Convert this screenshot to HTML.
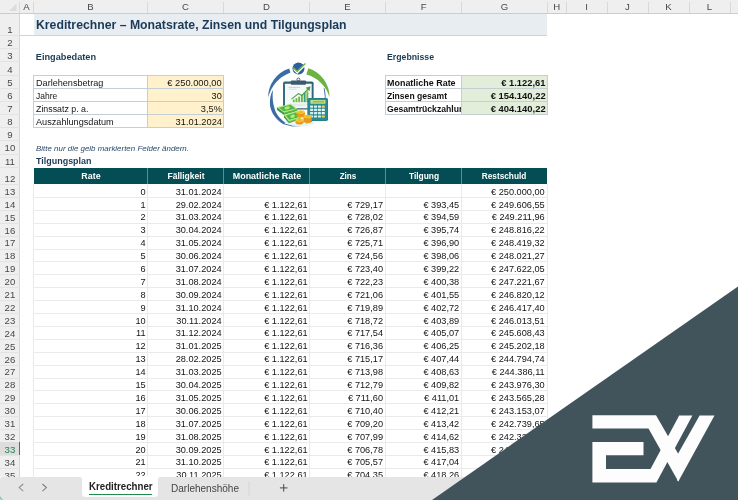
<!DOCTYPE html>
<html lang="de"><head><meta charset="utf-8"><title>Kreditrechner</title>
<style>
html,body{margin:0;padding:0}
body{width:738px;height:500px;overflow:hidden;position:relative;background:#fff;font-family:"Liberation Sans",sans-serif;color:#222}
.b{position:absolute}
.t{position:absolute;white-space:nowrap;transform-origin:0 0}
.t.r{transform-origin:100% 0}
.t.c{transform:translateX(-50%);transform-origin:50% 0}
.hd{font-size:9.6px;color:#484848}
.hd.g{color:#2a7d55}
.title{font-size:13.2px;font-weight:bold;color:#1b3a57}
.sec{font-size:9.2px;font-weight:bold;color:#1b3a57}
.sec2{font-size:9.6px;font-weight:bold;color:#1b3a57}
.note{font-size:7.9px;font-style:italic;color:#2b4a68}
.cell{font-size:9.2px;color:#141414}
.cellb{font-size:9.2px;font-weight:bold;color:#111}
.th{font-size:8.8px;font-weight:bold;color:#fff}
.tab{font-size:10px;color:#444}
.tabb{font-size:10px;font-weight:bold;color:#222}
#wrap{position:absolute;left:0;top:0;width:738px;height:500px;will-change:transform}
</style></head><body>
<div id="wrap">
<div class="b" style="left:0.00px;top:0.00px;width:738.00px;height:13.50px;background:#efefef"></div>
<div class="b" style="left:0.00px;top:12.80px;width:738.00px;height:0.80px;background:#cccccc"></div>
<div class="b" style="left:0.00px;top:13.50px;width:19.50px;height:466.50px;background:#efefef"></div>
<div class="b" style="left:19.00px;top:13.50px;width:0.70px;height:466.50px;background:#d6d6d6"></div>
<svg class="b" style="left:0;top:0" width="20" height="14"><polygon points="16.5,3.5 16.5,11 9,11" fill="#dcdcdc"/></svg>
<div class="b" style="left:33.10px;top:2.00px;width:0.80px;height:11.00px;background:#d9d9d9"></div>
<span class="t c hd" style="left:26.50px;top:1px;line-height:11px;">A</span>
<div class="b" style="left:147.10px;top:2.00px;width:0.80px;height:11.00px;background:#d9d9d9"></div>
<span class="t c hd" style="left:90.50px;top:1px;line-height:11px;">B</span>
<div class="b" style="left:223.10px;top:2.00px;width:0.80px;height:11.00px;background:#d9d9d9"></div>
<span class="t c hd" style="left:185.50px;top:1px;line-height:11px;">C</span>
<div class="b" style="left:309.10px;top:2.00px;width:0.80px;height:11.00px;background:#d9d9d9"></div>
<span class="t c hd" style="left:266.50px;top:1px;line-height:11px;">D</span>
<div class="b" style="left:385.10px;top:2.00px;width:0.80px;height:11.00px;background:#d9d9d9"></div>
<span class="t c hd" style="left:347.50px;top:1px;line-height:11px;">E</span>
<div class="b" style="left:461.30px;top:2.00px;width:0.80px;height:11.00px;background:#d9d9d9"></div>
<span class="t c hd" style="left:423.60px;top:1px;line-height:11px;">F</span>
<div class="b" style="left:546.80px;top:2.00px;width:0.80px;height:11.00px;background:#d9d9d9"></div>
<span class="t c hd" style="left:504.45px;top:1px;line-height:11px;">G</span>
<div class="b" style="left:565.80px;top:2.00px;width:0.80px;height:11.00px;background:#d9d9d9"></div>
<span class="t c hd" style="left:556.70px;top:1px;line-height:11px;">H</span>
<div class="b" style="left:606.60px;top:2.00px;width:0.80px;height:11.00px;background:#d9d9d9"></div>
<span class="t c hd" style="left:586.60px;top:1px;line-height:11px;">I</span>
<div class="b" style="left:647.60px;top:2.00px;width:0.80px;height:11.00px;background:#d9d9d9"></div>
<span class="t c hd" style="left:627.50px;top:1px;line-height:11px;">J</span>
<div class="b" style="left:688.60px;top:2.00px;width:0.80px;height:11.00px;background:#d9d9d9"></div>
<span class="t c hd" style="left:668.50px;top:1px;line-height:11px;">K</span>
<div class="b" style="left:729.60px;top:2.00px;width:0.80px;height:11.00px;background:#d9d9d9"></div>
<span class="t c hd" style="left:709.50px;top:1px;line-height:11px;">L</span>
<div class="b" style="left:770.60px;top:2.00px;width:0.80px;height:11.00px;background:#d9d9d9"></div>
<span class="t c hd" style="left:750.50px;top:1px;line-height:11px;">M</span>
<div class="b" style="left:19.10px;top:2.00px;width:0.80px;height:11.00px;background:#d9d9d9"></div>
<div class="b" style="left:0.00px;top:34.90px;width:19.50px;height:0.80px;background:#e3e3e3"></div>
<span class="t c hd" style="left:9.90px;top:24px;line-height:11px;">1</span>
<div class="b" style="left:0.00px;top:48.26px;width:19.50px;height:0.80px;background:#e3e3e3"></div>
<span class="t c hd" style="left:9.90px;top:37px;line-height:11px;">2</span>
<div class="b" style="left:0.00px;top:61.42px;width:19.50px;height:0.80px;background:#e3e3e3"></div>
<span class="t c hd" style="left:9.90px;top:50px;line-height:11px;">3</span>
<div class="b" style="left:0.00px;top:74.58px;width:19.50px;height:0.80px;background:#e3e3e3"></div>
<span class="t c hd" style="left:9.90px;top:64px;line-height:11px;">4</span>
<div class="b" style="left:0.00px;top:87.74px;width:19.50px;height:0.80px;background:#e3e3e3"></div>
<span class="t c hd" style="left:9.90px;top:77px;line-height:11px;">5</span>
<div class="b" style="left:0.00px;top:100.90px;width:19.50px;height:0.80px;background:#e3e3e3"></div>
<span class="t c hd" style="left:9.90px;top:90px;line-height:11px;">6</span>
<div class="b" style="left:0.00px;top:114.06px;width:19.50px;height:0.80px;background:#e3e3e3"></div>
<span class="t c hd" style="left:9.90px;top:103px;line-height:11px;">7</span>
<div class="b" style="left:0.00px;top:127.22px;width:19.50px;height:0.80px;background:#e3e3e3"></div>
<span class="t c hd" style="left:9.90px;top:116px;line-height:11px;">8</span>
<div class="b" style="left:0.00px;top:140.38px;width:19.50px;height:0.80px;background:#e3e3e3"></div>
<span class="t c hd" style="left:9.90px;top:129px;line-height:11px;">9</span>
<div class="b" style="left:0.00px;top:153.54px;width:19.50px;height:0.80px;background:#e3e3e3"></div>
<span class="t c hd" style="left:9.90px;top:142px;line-height:11px;">10</span>
<div class="b" style="left:0.00px;top:166.70px;width:19.50px;height:0.80px;background:#e3e3e3"></div>
<span class="t c hd" style="left:9.90px;top:156px;line-height:11px;">11</span>
<div class="b" style="left:0.00px;top:184.00px;width:19.50px;height:0.80px;background:#e3e3e3"></div>
<span class="t c hd" style="left:9.90px;top:173px;line-height:11px;">12</span>
<div class="b" style="left:0.00px;top:196.90px;width:19.50px;height:0.80px;background:#e3e3e3"></div>
<span class="t c hd" style="left:9.90px;top:186px;line-height:11px;">13</span>
<div class="b" style="left:0.00px;top:209.80px;width:19.50px;height:0.80px;background:#e3e3e3"></div>
<span class="t c hd" style="left:9.90px;top:199px;line-height:11px;">14</span>
<div class="b" style="left:0.00px;top:222.70px;width:19.50px;height:0.80px;background:#e3e3e3"></div>
<span class="t c hd" style="left:9.90px;top:212px;line-height:11px;">15</span>
<div class="b" style="left:0.00px;top:235.60px;width:19.50px;height:0.80px;background:#e3e3e3"></div>
<span class="t c hd" style="left:9.90px;top:225px;line-height:11px;">16</span>
<div class="b" style="left:0.00px;top:248.50px;width:19.50px;height:0.80px;background:#e3e3e3"></div>
<span class="t c hd" style="left:9.90px;top:237px;line-height:11px;">17</span>
<div class="b" style="left:0.00px;top:261.40px;width:19.50px;height:0.80px;background:#e3e3e3"></div>
<span class="t c hd" style="left:9.90px;top:250px;line-height:11px;">18</span>
<div class="b" style="left:0.00px;top:274.30px;width:19.50px;height:0.80px;background:#e3e3e3"></div>
<span class="t c hd" style="left:9.90px;top:263px;line-height:11px;">19</span>
<div class="b" style="left:0.00px;top:287.20px;width:19.50px;height:0.80px;background:#e3e3e3"></div>
<span class="t c hd" style="left:9.90px;top:276px;line-height:11px;">20</span>
<div class="b" style="left:0.00px;top:300.10px;width:19.50px;height:0.80px;background:#e3e3e3"></div>
<span class="t c hd" style="left:9.90px;top:289px;line-height:11px;">21</span>
<div class="b" style="left:0.00px;top:313.00px;width:19.50px;height:0.80px;background:#e3e3e3"></div>
<span class="t c hd" style="left:9.90px;top:302px;line-height:11px;">22</span>
<div class="b" style="left:0.00px;top:325.90px;width:19.50px;height:0.80px;background:#e3e3e3"></div>
<span class="t c hd" style="left:9.90px;top:315px;line-height:11px;">23</span>
<div class="b" style="left:0.00px;top:338.80px;width:19.50px;height:0.80px;background:#e3e3e3"></div>
<span class="t c hd" style="left:9.90px;top:328px;line-height:11px;">24</span>
<div class="b" style="left:0.00px;top:351.70px;width:19.50px;height:0.80px;background:#e3e3e3"></div>
<span class="t c hd" style="left:9.90px;top:341px;line-height:11px;">25</span>
<div class="b" style="left:0.00px;top:364.60px;width:19.50px;height:0.80px;background:#e3e3e3"></div>
<span class="t c hd" style="left:9.90px;top:354px;line-height:11px;">26</span>
<div class="b" style="left:0.00px;top:377.50px;width:19.50px;height:0.80px;background:#e3e3e3"></div>
<span class="t c hd" style="left:9.90px;top:366px;line-height:11px;">27</span>
<div class="b" style="left:0.00px;top:390.40px;width:19.50px;height:0.80px;background:#e3e3e3"></div>
<span class="t c hd" style="left:9.90px;top:379px;line-height:11px;">28</span>
<div class="b" style="left:0.00px;top:403.30px;width:19.50px;height:0.80px;background:#e3e3e3"></div>
<span class="t c hd" style="left:9.90px;top:392px;line-height:11px;">29</span>
<div class="b" style="left:0.00px;top:416.20px;width:19.50px;height:0.80px;background:#e3e3e3"></div>
<span class="t c hd" style="left:9.90px;top:405px;line-height:11px;">30</span>
<div class="b" style="left:0.00px;top:429.10px;width:19.50px;height:0.80px;background:#e3e3e3"></div>
<span class="t c hd" style="left:9.90px;top:418px;line-height:11px;">31</span>
<div class="b" style="left:0.00px;top:442.00px;width:19.50px;height:0.80px;background:#e3e3e3"></div>
<span class="t c hd" style="left:9.90px;top:431px;line-height:11px;">32</span>
<div class="b" style="left:0.00px;top:442.40px;width:19.70px;height:12.90px;background:#dddddd"></div>
<div class="b" style="left:18.50px;top:442.40px;width:1.30px;height:12.90px;background:#2a8555"></div>
<div class="b" style="left:0.00px;top:454.90px;width:19.50px;height:0.80px;background:#e3e3e3"></div>
<span class="t c hd g" style="left:9.90px;top:444px;line-height:11px;">33</span>
<div class="b" style="left:0.00px;top:467.80px;width:19.50px;height:0.80px;background:#e3e3e3"></div>
<span class="t c hd" style="left:9.90px;top:457px;line-height:11px;">34</span>
<div class="b" style="left:0.00px;top:480.70px;width:19.50px;height:0.80px;background:#e3e3e3"></div>
<span class="t c hd" style="left:9.90px;top:470px;line-height:11px;">35</span>
<div class="b" style="left:33.50px;top:13.60px;width:513.70px;height:21.40px;background:#e8edf2"></div>
<div class="b" style="left:19.70px;top:34.90px;width:527.50px;height:0.70px;background:#ccd4da"></div>
<span class="t title" style="left:36.00px;top:17px;line-height:15px;transform:scaleX(0.9282);">Kreditrechner – Monatsrate, Zinsen und Tilgungsplan</span>
<span class="t sec" style="left:35.80px;top:52px;line-height:10px;">Eingabedaten</span>
<span class="t sec" style="left:387.40px;top:52px;line-height:10px;transform:scaleX(0.9489);">Ergebnisse</span>
<div class="b" style="left:147.50px;top:75.70px;width:76.00px;height:51.90px;background:#fff1cb"></div>
<div class="b" style="left:33.10px;top:75.35px;width:190.80px;height:0.70px;background:#c6ced5"></div>
<div class="b" style="left:33.10px;top:88.35px;width:190.80px;height:0.70px;background:#c6ced5"></div>
<div class="b" style="left:33.10px;top:101.35px;width:190.80px;height:0.70px;background:#c6ced5"></div>
<div class="b" style="left:33.10px;top:114.35px;width:190.80px;height:0.70px;background:#c6ced5"></div>
<div class="b" style="left:33.10px;top:127.25px;width:190.80px;height:0.70px;background:#c6ced5"></div>
<div class="b" style="left:33.15px;top:75.35px;width:0.70px;height:52.60px;background:#c6ced5"></div>
<div class="b" style="left:147.15px;top:75.35px;width:0.70px;height:52.60px;background:#c6ced5"></div>
<div class="b" style="left:223.15px;top:75.35px;width:0.70px;height:52.60px;background:#c6ced5"></div>
<span class="t cell" style="left:35.60px;top:78px;line-height:10px;transform:scaleX(0.9906);">Darlehensbetrag</span>
<span class="t r cell" style="right:516.20px;top:78px;line-height:10px;transform:scaleX(1.0139);">€ 250.000,00</span>
<span class="t cell" style="left:35.60px;top:91px;line-height:10px;transform:scaleX(0.9224);">Jahre</span>
<span class="t r cell" style="right:516.20px;top:91px;line-height:10px;">30</span>
<span class="t cell" style="left:35.60px;top:104px;line-height:10px;transform:scaleX(0.9590);">Zinssatz p. a.</span>
<span class="t r cell" style="right:516.20px;top:104px;line-height:10px;">3,5%</span>
<span class="t cell" style="left:35.60px;top:117px;line-height:10px;transform:scaleX(0.9942);">Auszahlungsdatum</span>
<span class="t r cell" style="right:516.20px;top:117px;line-height:10px;transform:scaleX(1.0090);">31.01.2024</span>
<div class="b" style="left:461.70px;top:75.70px;width:85.50px;height:38.90px;background:#e2eeda"></div>
<div class="b" style="left:385.10px;top:75.35px;width:162.50px;height:0.70px;background:#c6ced5"></div>
<div class="b" style="left:385.10px;top:88.25px;width:162.50px;height:0.70px;background:#c6ced5"></div>
<div class="b" style="left:385.10px;top:101.35px;width:162.50px;height:0.70px;background:#c6ced5"></div>
<div class="b" style="left:385.10px;top:114.25px;width:162.50px;height:0.70px;background:#c6ced5"></div>
<div class="b" style="left:385.15px;top:75.35px;width:0.70px;height:39.60px;background:#c6ced5"></div>
<div class="b" style="left:461.35px;top:75.35px;width:0.70px;height:39.60px;background:#c6ced5"></div>
<div class="b" style="left:546.85px;top:75.35px;width:0.70px;height:39.60px;background:#c6ced5"></div>
<div class="b" style="left:386px;top:76px;width:75.4px;height:13px;overflow:hidden">
<span class="t cellb" style="left:1.30px;top:2px;line-height:10px;transform:scaleX(0.9737);">Monatliche Rate</span>
</div>
<span class="t r cellb" style="right:192.60px;top:78px;line-height:10px;transform:scaleX(1.0199);">€ 1.122,61</span>
<div class="b" style="left:386px;top:89px;width:75.4px;height:13px;overflow:hidden">
<span class="t cellb" style="left:1.30px;top:2px;line-height:10px;transform:scaleX(0.9325);">Zinsen gesamt</span>
</div>
<span class="t r cellb" style="right:192.60px;top:91px;line-height:10px;transform:scaleX(1.0250);">€ 154.140,22</span>
<div class="b" style="left:386px;top:102px;width:75.4px;height:13px;overflow:hidden">
<span class="t cellb" style="left:1.30px;top:2px;line-height:10px;transform:scaleX(0.9393);">Gesamtrückzahlung</span>
</div>
<span class="t r cellb" style="right:192.60px;top:104px;line-height:10px;transform:scaleX(1.0250);">€ 404.140,22</span>
<span class="t note" style="left:35.80px;top:144px;line-height:9px;transform:scaleX(1.0052);">Bitte nur die gelb markierten Felder ändern.</span>
<span class="t sec2" style="left:36.00px;top:155px;line-height:11px;transform:scaleX(0.9323);">Tilgungsplan</span>
<div class="b" style="left:33.60px;top:167.50px;width:513.60px;height:16.40px;background:#044d54"></div>
<span class="t c th" style="left:90.50px;top:171px;line-height:10px;transform:translateX(-50%) scaleX(1.0116);">Rate</span>
<span class="t c th" style="left:185.50px;top:171px;line-height:10px;transform:translateX(-50%) scaleX(0.9701);">Fälligkeit</span>
<div class="b" style="left:147.10px;top:167.50px;width:0.80px;height:16.40px;background:#5d8b8f"></div>
<span class="t c th" style="left:266.50px;top:171px;line-height:10px;transform:translateX(-50%) scaleX(1.0138);">Monatliche Rate</span>
<div class="b" style="left:223.10px;top:167.50px;width:0.80px;height:16.40px;background:#5d8b8f"></div>
<span class="t c th" style="left:347.50px;top:171px;line-height:10px;transform:translateX(-50%) scaleX(0.9230);">Zins</span>
<div class="b" style="left:309.10px;top:167.50px;width:0.80px;height:16.40px;background:#5d8b8f"></div>
<span class="t c th" style="left:423.60px;top:171px;line-height:10px;transform:translateX(-50%) scaleX(0.9554);">Tilgung</span>
<div class="b" style="left:385.10px;top:167.50px;width:0.80px;height:16.40px;background:#5d8b8f"></div>
<span class="t c th" style="left:504.45px;top:171px;line-height:10px;transform:translateX(-50%) scaleX(0.9405);">Restschuld</span>
<div class="b" style="left:461.30px;top:167.50px;width:0.80px;height:16.40px;background:#5d8b8f"></div>
<div class="b" style="left:33.50px;top:196.90px;width:514.10px;height:0.80px;background:#e8ebee"></div>
<span class="t r cell" style="right:592.40px;top:187px;line-height:10px;">0</span>
<span class="t r cell" style="right:516.40px;top:187px;line-height:10px;">31.01.2024</span>
<span class="t r cell" style="right:193.30px;top:187px;line-height:10px;">€ 250.000,00</span>
<div class="b" style="left:33.50px;top:209.80px;width:514.10px;height:0.80px;background:#e8ebee"></div>
<span class="t r cell" style="right:592.40px;top:200px;line-height:10px;">1</span>
<span class="t r cell" style="right:516.40px;top:200px;line-height:10px;">29.02.2024</span>
<span class="t r cell" style="right:430.40px;top:200px;line-height:10px;">€ 1.122,61</span>
<span class="t r cell" style="right:355.00px;top:200px;line-height:10px;">€ 729,17</span>
<span class="t r cell" style="right:278.80px;top:200px;line-height:10px;">€ 393,45</span>
<span class="t r cell" style="right:193.30px;top:200px;line-height:10px;">€ 249.606,55</span>
<div class="b" style="left:33.50px;top:222.70px;width:514.10px;height:0.80px;background:#e8ebee"></div>
<span class="t r cell" style="right:592.40px;top:212px;line-height:10px;">2</span>
<span class="t r cell" style="right:516.40px;top:212px;line-height:10px;">31.03.2024</span>
<span class="t r cell" style="right:430.40px;top:212px;line-height:10px;">€ 1.122,61</span>
<span class="t r cell" style="right:355.00px;top:212px;line-height:10px;">€ 728,02</span>
<span class="t r cell" style="right:278.80px;top:212px;line-height:10px;">€ 394,59</span>
<span class="t r cell" style="right:193.30px;top:212px;line-height:10px;">€ 249.211,96</span>
<div class="b" style="left:33.50px;top:235.60px;width:514.10px;height:0.80px;background:#e8ebee"></div>
<span class="t r cell" style="right:592.40px;top:225px;line-height:10px;">3</span>
<span class="t r cell" style="right:516.40px;top:225px;line-height:10px;">30.04.2024</span>
<span class="t r cell" style="right:430.40px;top:225px;line-height:10px;">€ 1.122,61</span>
<span class="t r cell" style="right:355.00px;top:225px;line-height:10px;">€ 726,87</span>
<span class="t r cell" style="right:278.80px;top:225px;line-height:10px;">€ 395,74</span>
<span class="t r cell" style="right:193.30px;top:225px;line-height:10px;">€ 248.816,22</span>
<div class="b" style="left:33.50px;top:248.50px;width:514.10px;height:0.80px;background:#e8ebee"></div>
<span class="t r cell" style="right:592.40px;top:238px;line-height:10px;">4</span>
<span class="t r cell" style="right:516.40px;top:238px;line-height:10px;">31.05.2024</span>
<span class="t r cell" style="right:430.40px;top:238px;line-height:10px;">€ 1.122,61</span>
<span class="t r cell" style="right:355.00px;top:238px;line-height:10px;">€ 725,71</span>
<span class="t r cell" style="right:278.80px;top:238px;line-height:10px;">€ 396,90</span>
<span class="t r cell" style="right:193.30px;top:238px;line-height:10px;">€ 248.419,32</span>
<div class="b" style="left:33.50px;top:261.40px;width:514.10px;height:0.80px;background:#e8ebee"></div>
<span class="t r cell" style="right:592.40px;top:251px;line-height:10px;">5</span>
<span class="t r cell" style="right:516.40px;top:251px;line-height:10px;">30.06.2024</span>
<span class="t r cell" style="right:430.40px;top:251px;line-height:10px;">€ 1.122,61</span>
<span class="t r cell" style="right:355.00px;top:251px;line-height:10px;">€ 724,56</span>
<span class="t r cell" style="right:278.80px;top:251px;line-height:10px;">€ 398,06</span>
<span class="t r cell" style="right:193.30px;top:251px;line-height:10px;">€ 248.021,27</span>
<div class="b" style="left:33.50px;top:274.30px;width:514.10px;height:0.80px;background:#e8ebee"></div>
<span class="t r cell" style="right:592.40px;top:264px;line-height:10px;">6</span>
<span class="t r cell" style="right:516.40px;top:264px;line-height:10px;">31.07.2024</span>
<span class="t r cell" style="right:430.40px;top:264px;line-height:10px;">€ 1.122,61</span>
<span class="t r cell" style="right:355.00px;top:264px;line-height:10px;">€ 723,40</span>
<span class="t r cell" style="right:278.80px;top:264px;line-height:10px;">€ 399,22</span>
<span class="t r cell" style="right:193.30px;top:264px;line-height:10px;">€ 247.622,05</span>
<div class="b" style="left:33.50px;top:287.20px;width:514.10px;height:0.80px;background:#e8ebee"></div>
<span class="t r cell" style="right:592.40px;top:277px;line-height:10px;">7</span>
<span class="t r cell" style="right:516.40px;top:277px;line-height:10px;">31.08.2024</span>
<span class="t r cell" style="right:430.40px;top:277px;line-height:10px;">€ 1.122,61</span>
<span class="t r cell" style="right:355.00px;top:277px;line-height:10px;">€ 722,23</span>
<span class="t r cell" style="right:278.80px;top:277px;line-height:10px;">€ 400,38</span>
<span class="t r cell" style="right:193.30px;top:277px;line-height:10px;">€ 247.221,67</span>
<div class="b" style="left:33.50px;top:300.10px;width:514.10px;height:0.80px;background:#e8ebee"></div>
<span class="t r cell" style="right:592.40px;top:290px;line-height:10px;">8</span>
<span class="t r cell" style="right:516.40px;top:290px;line-height:10px;">30.09.2024</span>
<span class="t r cell" style="right:430.40px;top:290px;line-height:10px;">€ 1.122,61</span>
<span class="t r cell" style="right:355.00px;top:290px;line-height:10px;">€ 721,06</span>
<span class="t r cell" style="right:278.80px;top:290px;line-height:10px;">€ 401,55</span>
<span class="t r cell" style="right:193.30px;top:290px;line-height:10px;">€ 246.820,12</span>
<div class="b" style="left:33.50px;top:313.00px;width:514.10px;height:0.80px;background:#e8ebee"></div>
<span class="t r cell" style="right:592.40px;top:303px;line-height:10px;">9</span>
<span class="t r cell" style="right:516.40px;top:303px;line-height:10px;">31.10.2024</span>
<span class="t r cell" style="right:430.40px;top:303px;line-height:10px;">€ 1.122,61</span>
<span class="t r cell" style="right:355.00px;top:303px;line-height:10px;">€ 719,89</span>
<span class="t r cell" style="right:278.80px;top:303px;line-height:10px;">€ 402,72</span>
<span class="t r cell" style="right:193.30px;top:303px;line-height:10px;">€ 246.417,40</span>
<div class="b" style="left:33.50px;top:325.90px;width:514.10px;height:0.80px;background:#e8ebee"></div>
<span class="t r cell" style="right:592.40px;top:316px;line-height:10px;">10</span>
<span class="t r cell" style="right:516.40px;top:316px;line-height:10px;">30.11.2024</span>
<span class="t r cell" style="right:430.40px;top:316px;line-height:10px;">€ 1.122,61</span>
<span class="t r cell" style="right:355.00px;top:316px;line-height:10px;">€ 718,72</span>
<span class="t r cell" style="right:278.80px;top:316px;line-height:10px;">€ 403,89</span>
<span class="t r cell" style="right:193.30px;top:316px;line-height:10px;">€ 246.013,51</span>
<div class="b" style="left:33.50px;top:338.80px;width:514.10px;height:0.80px;background:#e8ebee"></div>
<span class="t r cell" style="right:592.40px;top:328px;line-height:10px;">11</span>
<span class="t r cell" style="right:516.40px;top:328px;line-height:10px;">31.12.2024</span>
<span class="t r cell" style="right:430.40px;top:328px;line-height:10px;">€ 1.122,61</span>
<span class="t r cell" style="right:355.00px;top:328px;line-height:10px;">€ 717,54</span>
<span class="t r cell" style="right:278.80px;top:328px;line-height:10px;">€ 405,07</span>
<span class="t r cell" style="right:193.30px;top:328px;line-height:10px;">€ 245.608,43</span>
<div class="b" style="left:33.50px;top:351.70px;width:514.10px;height:0.80px;background:#e8ebee"></div>
<span class="t r cell" style="right:592.40px;top:341px;line-height:10px;">12</span>
<span class="t r cell" style="right:516.40px;top:341px;line-height:10px;">31.01.2025</span>
<span class="t r cell" style="right:430.40px;top:341px;line-height:10px;">€ 1.122,61</span>
<span class="t r cell" style="right:355.00px;top:341px;line-height:10px;">€ 716,36</span>
<span class="t r cell" style="right:278.80px;top:341px;line-height:10px;">€ 406,25</span>
<span class="t r cell" style="right:193.30px;top:341px;line-height:10px;">€ 245.202,18</span>
<div class="b" style="left:33.50px;top:364.60px;width:514.10px;height:0.80px;background:#e8ebee"></div>
<span class="t r cell" style="right:592.40px;top:354px;line-height:10px;">13</span>
<span class="t r cell" style="right:516.40px;top:354px;line-height:10px;">28.02.2025</span>
<span class="t r cell" style="right:430.40px;top:354px;line-height:10px;">€ 1.122,61</span>
<span class="t r cell" style="right:355.00px;top:354px;line-height:10px;">€ 715,17</span>
<span class="t r cell" style="right:278.80px;top:354px;line-height:10px;">€ 407,44</span>
<span class="t r cell" style="right:193.30px;top:354px;line-height:10px;">€ 244.794,74</span>
<div class="b" style="left:33.50px;top:377.50px;width:514.10px;height:0.80px;background:#e8ebee"></div>
<span class="t r cell" style="right:592.40px;top:367px;line-height:10px;">14</span>
<span class="t r cell" style="right:516.40px;top:367px;line-height:10px;">31.03.2025</span>
<span class="t r cell" style="right:430.40px;top:367px;line-height:10px;">€ 1.122,61</span>
<span class="t r cell" style="right:355.00px;top:367px;line-height:10px;">€ 713,98</span>
<span class="t r cell" style="right:278.80px;top:367px;line-height:10px;">€ 408,63</span>
<span class="t r cell" style="right:193.30px;top:367px;line-height:10px;">€ 244.386,11</span>
<div class="b" style="left:33.50px;top:390.40px;width:514.10px;height:0.80px;background:#e8ebee"></div>
<span class="t r cell" style="right:592.40px;top:380px;line-height:10px;">15</span>
<span class="t r cell" style="right:516.40px;top:380px;line-height:10px;">30.04.2025</span>
<span class="t r cell" style="right:430.40px;top:380px;line-height:10px;">€ 1.122,61</span>
<span class="t r cell" style="right:355.00px;top:380px;line-height:10px;">€ 712,79</span>
<span class="t r cell" style="right:278.80px;top:380px;line-height:10px;">€ 409,82</span>
<span class="t r cell" style="right:193.30px;top:380px;line-height:10px;">€ 243.976,30</span>
<div class="b" style="left:33.50px;top:403.30px;width:514.10px;height:0.80px;background:#e8ebee"></div>
<span class="t r cell" style="right:592.40px;top:393px;line-height:10px;">16</span>
<span class="t r cell" style="right:516.40px;top:393px;line-height:10px;">31.05.2025</span>
<span class="t r cell" style="right:430.40px;top:393px;line-height:10px;">€ 1.122,61</span>
<span class="t r cell" style="right:355.00px;top:393px;line-height:10px;">€ 711,60</span>
<span class="t r cell" style="right:278.80px;top:393px;line-height:10px;">€ 411,01</span>
<span class="t r cell" style="right:193.30px;top:393px;line-height:10px;">€ 243.565,28</span>
<div class="b" style="left:33.50px;top:416.20px;width:514.10px;height:0.80px;background:#e8ebee"></div>
<span class="t r cell" style="right:592.40px;top:406px;line-height:10px;">17</span>
<span class="t r cell" style="right:516.40px;top:406px;line-height:10px;">30.06.2025</span>
<span class="t r cell" style="right:430.40px;top:406px;line-height:10px;">€ 1.122,61</span>
<span class="t r cell" style="right:355.00px;top:406px;line-height:10px;">€ 710,40</span>
<span class="t r cell" style="right:278.80px;top:406px;line-height:10px;">€ 412,21</span>
<span class="t r cell" style="right:193.30px;top:406px;line-height:10px;">€ 243.153,07</span>
<div class="b" style="left:33.50px;top:429.10px;width:514.10px;height:0.80px;background:#e8ebee"></div>
<span class="t r cell" style="right:592.40px;top:419px;line-height:10px;">18</span>
<span class="t r cell" style="right:516.40px;top:419px;line-height:10px;">31.07.2025</span>
<span class="t r cell" style="right:430.40px;top:419px;line-height:10px;">€ 1.122,61</span>
<span class="t r cell" style="right:355.00px;top:419px;line-height:10px;">€ 709,20</span>
<span class="t r cell" style="right:278.80px;top:419px;line-height:10px;">€ 413,42</span>
<span class="t r cell" style="right:193.30px;top:419px;line-height:10px;">€ 242.739,65</span>
<div class="b" style="left:33.50px;top:442.00px;width:514.10px;height:0.80px;background:#e8ebee"></div>
<span class="t r cell" style="right:592.40px;top:432px;line-height:10px;">19</span>
<span class="t r cell" style="right:516.40px;top:432px;line-height:10px;">31.08.2025</span>
<span class="t r cell" style="right:430.40px;top:432px;line-height:10px;">€ 1.122,61</span>
<span class="t r cell" style="right:355.00px;top:432px;line-height:10px;">€ 707,99</span>
<span class="t r cell" style="right:278.80px;top:432px;line-height:10px;">€ 414,62</span>
<span class="t r cell" style="right:193.30px;top:432px;line-height:10px;">€ 242.325,03</span>
<div class="b" style="left:33.50px;top:454.90px;width:514.10px;height:0.80px;background:#e8ebee"></div>
<span class="t r cell" style="right:592.40px;top:445px;line-height:10px;">20</span>
<span class="t r cell" style="right:516.40px;top:445px;line-height:10px;">30.09.2025</span>
<span class="t r cell" style="right:430.40px;top:445px;line-height:10px;">€ 1.122,61</span>
<span class="t r cell" style="right:355.00px;top:445px;line-height:10px;">€ 706,78</span>
<span class="t r cell" style="right:278.80px;top:445px;line-height:10px;">€ 415,83</span>
<span class="t r cell" style="right:193.30px;top:445px;line-height:10px;">€ 241.909,20</span>
<div class="b" style="left:33.50px;top:467.80px;width:514.10px;height:0.80px;background:#e8ebee"></div>
<span class="t r cell" style="right:592.40px;top:457px;line-height:10px;">21</span>
<span class="t r cell" style="right:516.40px;top:457px;line-height:10px;">31.10.2025</span>
<span class="t r cell" style="right:430.40px;top:457px;line-height:10px;">€ 1.122,61</span>
<span class="t r cell" style="right:355.00px;top:457px;line-height:10px;">€ 705,57</span>
<span class="t r cell" style="right:278.80px;top:457px;line-height:10px;">€ 417,04</span>
<span class="t r cell" style="right:193.30px;top:457px;line-height:10px;">€ 241.492,16</span>
<div class="b" style="left:33.50px;top:480.70px;width:514.10px;height:0.80px;background:#e8ebee"></div>
<span class="t r cell" style="right:592.40px;top:470px;line-height:10px;">22</span>
<span class="t r cell" style="right:516.40px;top:470px;line-height:10px;">30.11.2025</span>
<span class="t r cell" style="right:430.40px;top:470px;line-height:10px;">€ 1.122,61</span>
<span class="t r cell" style="right:355.00px;top:470px;line-height:10px;">€ 704,35</span>
<span class="t r cell" style="right:278.80px;top:470px;line-height:10px;">€ 418,26</span>
<span class="t r cell" style="right:193.30px;top:470px;line-height:10px;">€ 241.073,90</span>
<div class="b" style="left:147.10px;top:184.40px;width:0.80px;height:295.60px;background:#e8ebee"></div>
<div class="b" style="left:223.10px;top:184.40px;width:0.80px;height:295.60px;background:#e8ebee"></div>
<div class="b" style="left:309.10px;top:184.40px;width:0.80px;height:295.60px;background:#e8ebee"></div>
<div class="b" style="left:385.10px;top:184.40px;width:0.80px;height:295.60px;background:#e8ebee"></div>
<div class="b" style="left:461.30px;top:184.40px;width:0.80px;height:295.60px;background:#e8ebee"></div>
<div class="b" style="left:546.80px;top:184.40px;width:0.80px;height:295.60px;background:#e8ebee"></div>
<div class="b" style="left:33.10px;top:184.40px;width:0.80px;height:295.60px;background:#e8ebee"></div>
<!-- icon -->
<svg class="b" style="left:260px;top:55px" width="80" height="80" viewBox="0 0 500 500">
  <path d="M182.3,84.3 A190,190 0 0 0 51.0,265.0 A232.6,232.6 0 0 1 190.4,109.2 Z" fill="#3a6ca6"/>
  <path d="M81,219 C62,250 58,300 66,331 C75,365 100,405 150,434 L158,422 C120,395 98,365 90,331 C80,300 76,260 81,219 Z" fill="#3a6ca6"/>
  <path d="M302.3,82.4 A192,192 0 0 1 435.0,265.0 A204.7,204.7 0 0 0 289.3,122.4 Z" fill="#6db343"/>
  <path d="M401,208 A186,186 0 0 1 150,430" fill="none" stroke="#35609c" stroke-width="5.5"/>
  <path d="M150,418 Q244,470 345,428 L330,418 Q244,448 165,410 Z" fill="#eaf1f8"/>
  <circle cx="240.5" cy="84" r="37.5" fill="#2f5f9b"/>
  <polyline points="211,89 232.5,111 278,67" fill="none" stroke="#fff" stroke-width="11"/>
  <polyline points="206,78 232,102 284,53" fill="none" stroke="#6db343" stroke-width="9"/>
  <rect x="144" y="166" width="191" height="174" rx="11" fill="#2d6676"/>
  <rect x="156" y="179" width="167" height="154" rx="4" fill="#f6f9fa"/>
  <circle cx="240" cy="153" r="9" fill="none" stroke="#3c5872" stroke-width="6"/>
  <rect x="192" y="159" width="96" height="27" rx="7" fill="#3c5872"/>
  <rect x="178" y="199" width="72" height="5" fill="#b9c6ce"/>
  <rect x="178" y="211" width="52" height="5" fill="#d2dadf"/>
  <g fill="#74b947"><rect x="205" y="279" width="12" height="16"/><rect x="222" y="270" width="12" height="25"/><rect x="239" y="260" width="12" height="35"/><rect x="256" y="250" width="12" height="45"/><rect x="273" y="238" width="12" height="57" fill="#3f9a8a"/><rect x="290" y="228" width="12" height="67"/></g>
  <polyline points="197,276 240,241 262,253 303,211" fill="none" stroke="#4a9e3f" stroke-width="7"/>
  <polygon points="286,204 316,196 309,226" fill="#4a9e3f"/>
  <rect x="180" y="305" width="125" height="4" fill="#d2dadf"/>
  <rect x="180" y="316" width="105" height="4" fill="#d2dadf"/>
  <rect x="296" y="268" width="129" height="144" rx="11" fill="#237c84"/>
  <rect x="300" y="272" width="121" height="136" rx="9" fill="#2a8a90"/>
  <rect x="315" y="281" width="94" height="23" rx="3" fill="#c3e08f"/>
  <rect x="330" y="287" width="70" height="10" fill="#8fbf5d"/>
  <rect x="313" y="316" width="19" height="13" rx="2" fill="#d4f0f1"/><rect x="337.5" y="316" width="19" height="13" rx="2" fill="#d4f0f1"/><rect x="362" y="316" width="19" height="13" rx="2" fill="#d4f0f1"/><rect x="386" y="316" width="19" height="13" rx="2" fill="#f2d24f"/><rect x="313" y="336.5" width="19" height="13" rx="2" fill="#d4f0f1"/><rect x="337.5" y="336.5" width="19" height="13" rx="2" fill="#d4f0f1"/><rect x="362" y="336.5" width="19" height="13" rx="2" fill="#d4f0f1"/><rect x="386" y="336.5" width="19" height="13" rx="2" fill="#f4fbfb"/><rect x="313" y="357" width="19" height="13" rx="2" fill="#d4f0f1"/><rect x="337.5" y="357" width="19" height="13" rx="2" fill="#d4f0f1"/><rect x="362" y="357" width="19" height="13" rx="2" fill="#d4f0f1"/><rect x="386" y="357" width="19" height="13" rx="2" fill="#f4fbfb"/><rect x="313" y="377.5" width="19" height="13" rx="2" fill="#d4f0f1"/><rect x="337.5" y="377.5" width="19" height="13" rx="2" fill="#d4f0f1"/><rect x="362" y="377.5" width="19" height="13" rx="2" fill="#d4f0f1"/><rect x="386" y="377.5" width="19" height="13" rx="2" fill="#f2d24f"/>
  <g>
    <polygon points="106,327 192,305 234,336 150,359" fill="#b5ea79"/>
    <polygon points="118,329 190,311 221,335 150,352" fill="#4db847"/>
    <ellipse cx="170" cy="331" rx="17" ry="9" fill="#b5ea79" transform="rotate(-14 170 331)"/>
    <polygon points="106,327 150,359 150,375 106,343" fill="#3f9c3d"/>
    <polygon points="150,359 234,336 234,350 150,375" fill="#58b64a"/>
    <polygon points="150,375 228,352 254,390 181,414" fill="#b5ea79"/>
    <polygon points="162,378 224,360 243,387 184,405" fill="#4db847"/>
    <ellipse cx="204" cy="383" rx="15" ry="10" fill="#b5ea79" transform="rotate(-18 204 383)"/>
    <polygon points="150,375 181,414 181,426 150,390" fill="#3f9c3d"/>
    <polygon points="181,414 254,390 254,402 181,426" fill="#58b64a"/>
  </g>
  <rect x="230" y="357" width="50" height="23" fill="#e9a21d"/><ellipse cx="255" cy="380" rx="25" ry="11" fill="#e9a21d"/><ellipse cx="255" cy="371" rx="25" ry="11" fill="none" stroke="#d48a10" stroke-width="2"/><ellipse cx="255" cy="362" rx="25" ry="11" fill="none" stroke="#d48a10" stroke-width="2"/><ellipse cx="255" cy="357" rx="25" ry="11" fill="#fbc935"/><ellipse cx="255" cy="357" rx="15.0" ry="6.1" fill="#f3b121"/>
  <rect x="272" y="385" width="50" height="29" fill="#e9a21d"/><ellipse cx="297" cy="414" rx="25" ry="11" fill="#e9a21d"/><ellipse cx="297" cy="405" rx="25" ry="11" fill="none" stroke="#d48a10" stroke-width="2"/><ellipse cx="297" cy="396" rx="25" ry="11" fill="none" stroke="#d48a10" stroke-width="2"/><ellipse cx="297" cy="387" rx="25" ry="11" fill="none" stroke="#d48a10" stroke-width="2"/><ellipse cx="297" cy="385" rx="25" ry="11" fill="#fbc935"/><ellipse cx="297" cy="385" rx="15.0" ry="6.1" fill="#f3b121"/>
  <rect x="222" y="407" width="50" height="17" fill="#e9a21d"/><ellipse cx="247" cy="424" rx="25" ry="11" fill="#e9a21d"/><ellipse cx="247" cy="415" rx="25" ry="11" fill="none" stroke="#d48a10" stroke-width="2"/><ellipse cx="247" cy="407" rx="25" ry="11" fill="#fbc935"/><ellipse cx="247" cy="407" rx="15.0" ry="6.1" fill="#f3b121"/>
</svg>

<!-- sheet tab bar -->
<div class="b" style="left:0;top:476.6px;width:738px;height:24px;background:#e5e5e5"></div>
<div class="b" style="left:82px;top:476px;width:76.4px;height:20.8px;background:#fff;border-radius:0 0 3.5px 3.5px"></div>
<div class="b" style="left:79px;top:476.6px;width:3px;height:3px;background:radial-gradient(circle at 0 100%,#e5e5e5 2.9px,#fff 3.1px)"></div>
<div class="b" style="left:158.4px;top:476.6px;width:3px;height:3px;background:radial-gradient(circle at 100% 100%,#e5e5e5 2.9px,#fff 3.1px)"></div>
<div class="b" style="left:88.5px;top:493.9px;width:63.5px;height:1.4px;background:#1e8a4c"></div>
<svg class="b" style="left:0;top:476px" width="300" height="24" viewBox="0 476 300 24">
  <!-- corner-bl -->
  <path d="M0,476.6 L3,476.6 A3,3 0 0 0 0,479.6 Z" fill="#fff"/>
  <path d="M0,496 L3,500 L1.2,500 L0,498.2 Z" fill="#8fc7a4"/>
  <polyline points="23.2,484 19.2,487.6 23.2,491.2" fill="none" stroke="#909090" stroke-width="1.1"/>
  <polyline points="42.4,484 46.4,487.6 42.4,491.2" fill="none" stroke="#808080" stroke-width="1.1"/>
  <line x1="249" y1="481" x2="249" y2="495.4" stroke="#d2d2d2" stroke-width="0.8"/>
  <line x1="279.9" y1="487.9" x2="287.5" y2="487.9" stroke="#3a3a3a" stroke-width="0.9"/>
  <line x1="283.7" y1="484.1" x2="283.7" y2="491.7" stroke="#3a3a3a" stroke-width="0.9"/>
</svg>
<!-- corner overlay -->
<svg class="b" style="left:0;top:0" width="738" height="500" viewBox="0 0 738 500">
  <polygon points="432,500 738,286.4 738,500" fill="#41535b"/>
  <g fill="#fdfdfd">
    <!-- top bar + back-slash -->
    <polygon points="592.4,415.2 656,415.2 678.6,454.4 678.3,481.6 648.5,428.5 592.4,428.5"/>
    <!-- lower E -->
    <polygon points="592.4,442 643.5,442 643.5,455.3 606,455.3 606,469 650.5,469 679.2,415.4 692.4,415.4 656.4,482.4 592.4,482.4"/>
    <!-- right slash -->
    <polygon points="677.6,454.4 699.6,415.4 714.5,415.4 678.3,481.6 677.3,480.4"/>
  </g>
</svg>

<span class="t tabb" style="left:88.50px;top:481px;line-height:11px;transform:scaleX(0.9698);">Kreditrechner</span>
<span class="t tab" style="left:171.40px;top:483px;line-height:11px;transform:scaleX(1.0025);">Darlehenshöhe</span>
</div>
</body></html>
